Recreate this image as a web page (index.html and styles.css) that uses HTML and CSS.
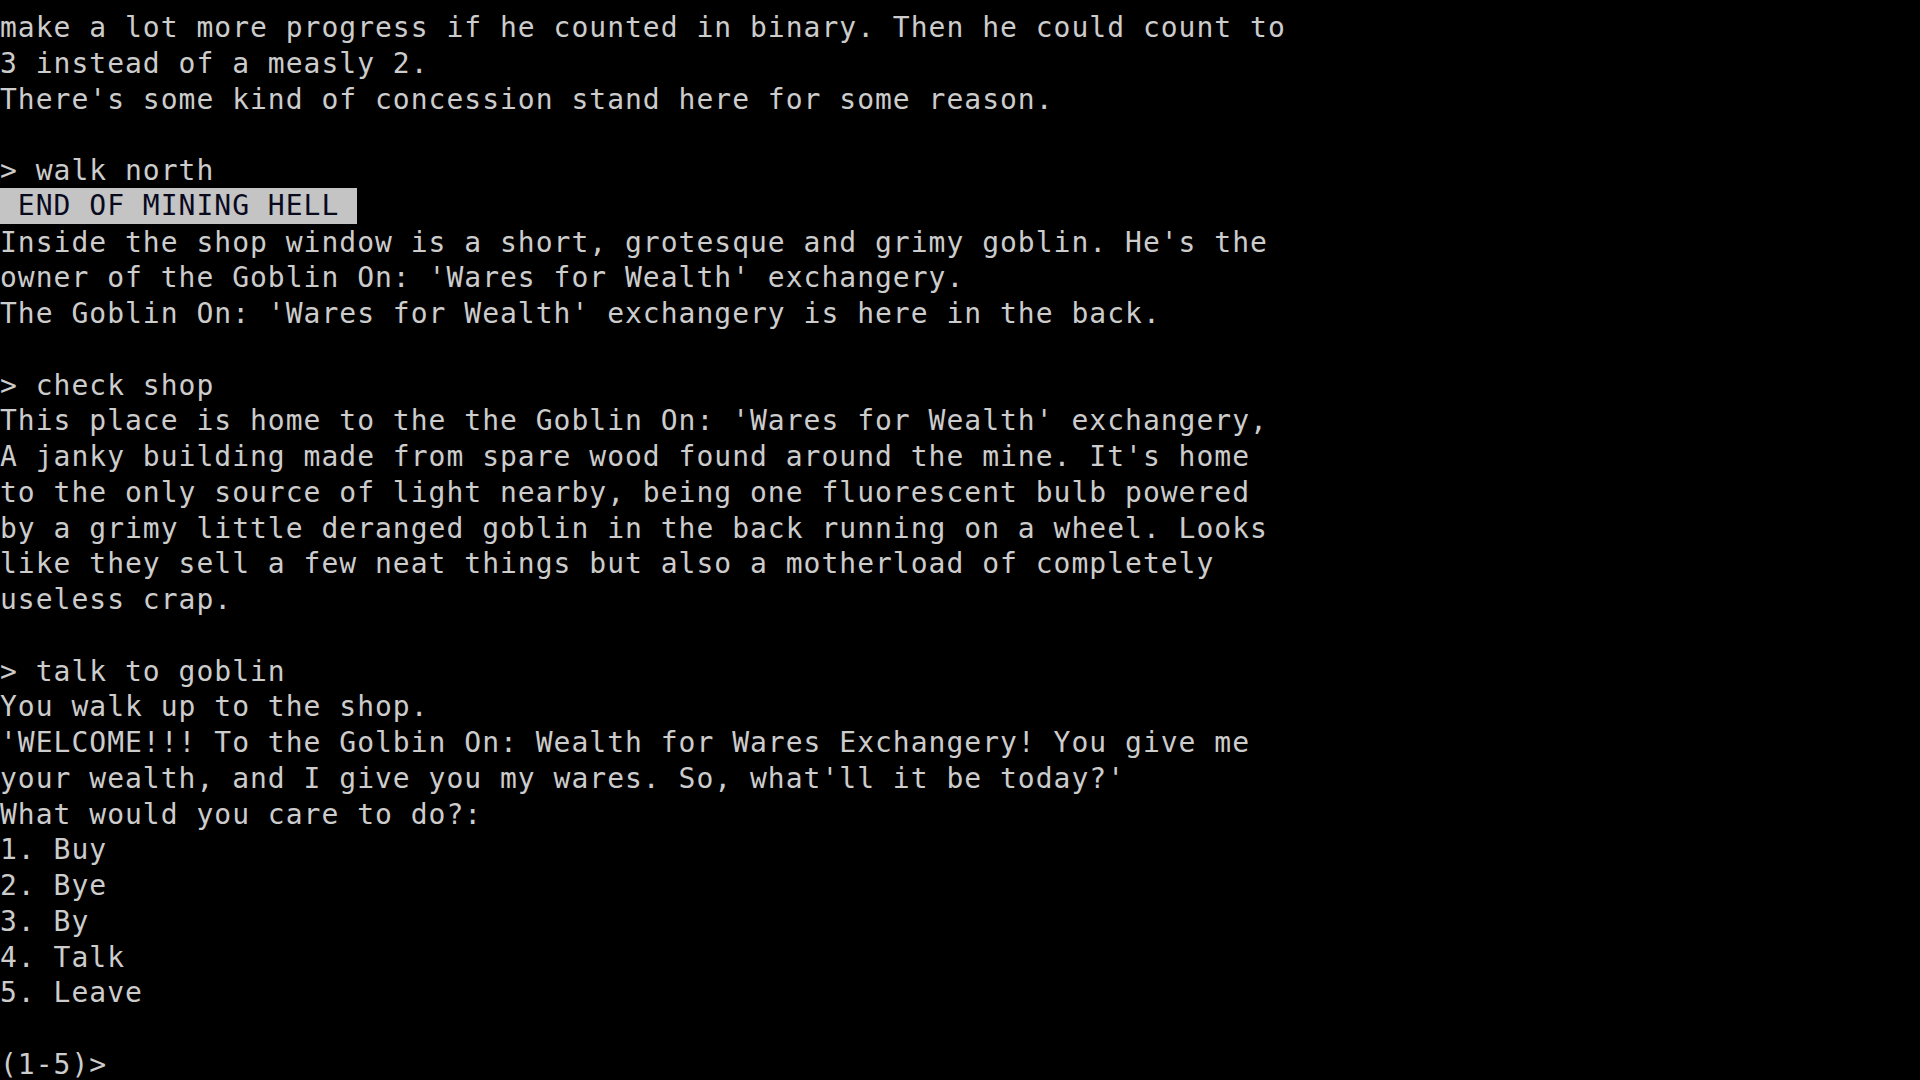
FILE: index.html
```html
<!DOCTYPE html>
<html lang="en">
<head>
<meta charset="utf-8">
<title>Console</title>
<link rel="stylesheet" href="styles.css">
</head>
<body>
<main class="console">
<div class="line">make a lot more progress if he counted in binary. Then he could count to</div>
<div class="line">3 instead of a measly 2.</div>
<div class="line">There's some kind of concession stand here for some reason.</div>
<div class="line"> </div>
<div class="line">&gt; walk north</div>
<div class="line"><span class="banner"> END OF MINING HELL </span></div>
<div class="line">Inside the shop window is a short, grotesque and grimy goblin. He's the</div>
<div class="line">owner of the Goblin On: 'Wares for Wealth' exchangery.</div>
<div class="line">The Goblin On: 'Wares for Wealth' exchangery is here in the back.</div>
<div class="line"> </div>
<div class="line">&gt; check shop</div>
<div class="line">This place is home to the the Goblin On: 'Wares for Wealth' exchangery,</div>
<div class="line">A janky building made from spare wood found around the mine. It's home</div>
<div class="line">to the only source of light nearby, being one fluorescent bulb powered</div>
<div class="line">by a grimy little deranged goblin in the back running on a wheel. Looks</div>
<div class="line">like they sell a few neat things but also a motherload of completely</div>
<div class="line">useless crap.</div>
<div class="line"> </div>
<div class="line">&gt; talk to goblin</div>
<div class="line">You walk up to the shop.</div>
<div class="line">'WELCOME!!! To the Golbin On: Wealth for Wares Exchangery! You give me</div>
<div class="line">your wealth, and I give you my wares. So, what'll it be today?'</div>
<div class="line">What would you care to do?:</div>
<div class="line">1. Buy</div>
<div class="line">2. Bye</div>
<div class="line">3. By</div>
<div class="line">4. Talk</div>
<div class="line">5. Leave</div>
<div class="line"> </div>
<div class="line">(1-5)&gt;</div>
</main>
</body>
</html>
```
FILE: styles.css
```css
html, body {
  margin: 0;
  padding: 0;
  background: #000000;
  height: 1080px;
  overflow: hidden;
}

.console {
  padding-top: 10px;
  font-family: "DejaVu Sans Mono", "Liberation Mono", monospace;
  font-size: 28px;
  letter-spacing: 1px;
  line-height: 35.75px;
  color: #cccccc;
}

.line {
  white-space: pre;
  height: 35.75px;
}

.banner {
  display: inline-block;
  background: #c4c4c4;
  color: #0a0a1e;
  height: 35.75px;
  margin-top: -1px;
  vertical-align: top;
}
```
